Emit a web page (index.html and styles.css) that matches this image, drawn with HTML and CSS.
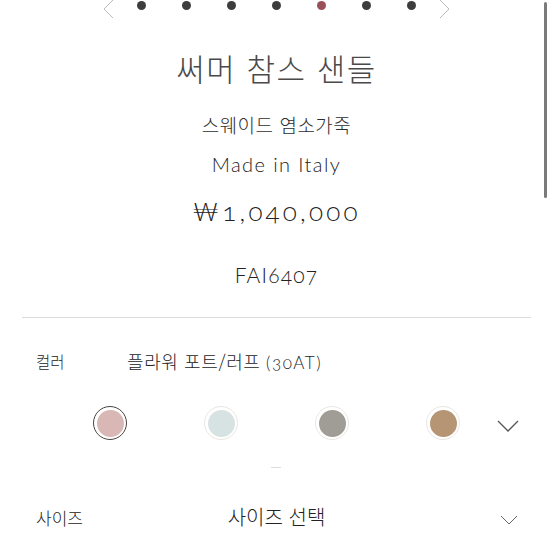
FILE: index.html
```html
<!DOCTYPE html>
<html lang="ko">
<head>
<meta charset="utf-8">
<link rel="stylesheet" href="styles.css">
</head>
<body>
<div class="page">
  <nav class="carousel">
    <svg class="arrow" width="14" height="20" viewBox="0 0 14 20"><path d="M12 1 L3 10 L12 19" fill="none" stroke="#bbb" stroke-width="1"/></svg>
    <div class="dots">
      <span class="dot"></span><span class="dot"></span><span class="dot"></span><span class="dot"></span><span class="dot active"></span><span class="dot"></span><span class="dot"></span>
    </div>
    <svg class="arrow" width="14" height="20" viewBox="0 0 14 20"><path d="M2 1 L11 10 L2 19" fill="none" stroke="#bbb" stroke-width="1"/></svg>
  </nav>
  <section class="info">
    <h1 class="title">써머 참스 샌들</h1>
    <p class="material">스웨이드 염소가죽</p>
    <p class="origin">Made in Italy</p>
    <p class="price">₩1,040,000</p>
    <p class="code">FAI6407</p>
  </section>
  <div class="options">
    <div class="row color-row">
      <span class="label">컬러</span>
      <span class="value">플라워 포트/러프 <span class="latin">(30AT)</span></span>
    </div>
    <div class="swatches">
      <span class="swatch selected"><span class="fill pink"></span></span>
      <span class="swatch"><span class="fill mint"></span></span>
      <span class="swatch"><span class="fill grey"></span></span>
      <span class="swatch"><span class="fill tan"></span></span>
      <svg class="chev" width="22" height="13" viewBox="0 0 22 13"><path d="M1 1 L11 11 L21 1" fill="none" stroke="#555" stroke-width="1.3"/></svg>
    </div>
    <div class="handle"></div>
    <div class="row size-row">
      <span class="label">사이즈</span>
      <span class="select">사이즈 선택</span>
      <svg class="chev small" width="18" height="10" viewBox="0 0 18 10"><path d="M1 1 L9 9 L17 1" fill="none" stroke="#666" stroke-width="1"/></svg>
    </div>
  </div>
  <div class="scrollbar"></div>
</div>
</body>
</html>
```
FILE: styles.css
```css
html, body { margin: 0; padding: 0; background: #fff; }
body {
  font-family: "Noto Sans CJK KR", "Noto Sans", sans-serif;
  color: #333;
  width: 553px;
  height: 553px;
  overflow: hidden;
}
.page { position: relative; height: 553px; }
.carousel {
  display: flex;
  align-items: center;
  justify-content: center;
  height: 20px;
  gap: 22px;
  margin-top: -1px;
}
.arrow { display: block; }
.dots { display: flex; gap: 36px; margin-top: -8px; }
.dot { width: 9px; height: 9px; border-radius: 50%; background: #3d3d3d; }
.dot.active { background: #9b5059; }

.info { text-align: center; }
.title {
  margin: 29px 0 0;
  font-size: 31px;
  font-weight: 300;
  line-height: 40px;
  color: #4a4a4a;
  letter-spacing: 1.5px;
}
.material {
  margin: 25px 0 0;
  font-size: 19px;
  font-weight: 300;
  line-height: 24px;
  color: #2e2e2e;
  letter-spacing: 0.5px;
}
.latin, .origin, .price, .code {
  font-family: Lato, "Noto Sans", sans-serif;
  font-variant-numeric: oldstyle-nums;
}
.origin {
  margin: 14px 0 0;
  font-size: 20px;
  font-weight: 300;
  line-height: 26px;
  letter-spacing: 1.4px;
  color: #222;
}
.price {
  margin: 18px 0 0;
  font-size: 26px;
  font-weight: 300;
  line-height: 32px;
  letter-spacing: 3.2px;
  color: #222;
}
.code {
  margin: 34px 0 0;
  font-size: 21px;
  font-weight: 300;
  line-height: 28px;
  letter-spacing: 1.2px;
  color: #222;
}
.options {
  margin: 28px 22px 0;
  border-top: 1px solid #dcdcdc;
}
.row { display: flex; align-items: center; }
.color-row { padding: 29px 0 0 14px; height: 28px; }
.label { font-size: 15.5px; color: #222; width: 91px; font-weight: 300; }
.value { font-size: 18px; color: #222; letter-spacing: 0.6px; font-weight: 300; }
.value .latin { font-size: 17px; letter-spacing: 1.5px; }
.swatches {
  display: flex;
  align-items: center;
  margin-top: 30px;
  padding-left: 71px;
  gap: 77px;
  height: 36px;
}
.swatch {
  width: 34px; height: 34px;
  border-radius: 50%;
  border: 1px solid #ebe7e2;
  box-sizing: border-box;
  display: flex; align-items: center; justify-content: center;
}
.swatch.selected { border: 1.5px solid #4a4341; }
.fill { width: 27px; height: 27px; border-radius: 50%; }
.pink { background: #d8b7b5; }
.mint { background: #d7e3e3; }
.grey { background: #9f9d95; }
.tan { background: #b59574; }
.swatches .chev { margin-left: -40px; margin-top: 6px; }
.handle {
  width: 10px; height: 1px;
  background: #ddd;
  margin: 26px auto 0 249px;
}
.size-row { padding: 38px 0 0 14px; height: 22px; position: relative; }
.size-row .label { width: auto; font-size: 17px; }
.select {
  position: absolute;
  left: 0; right: 0;
  text-align: center;
  font-size: 20px;
  font-weight: 300;
  color: #222;
  top: 38px;
  line-height: 22px;
}
.size-row .chev { position: absolute; right: 13px; top: 47px; }
.scrollbar {
  position: absolute;
  right: 6px; top: 3px;
  width: 3px; height: 196px;
  border-radius: 2px;
  background: #7a7a7a;
}
```
